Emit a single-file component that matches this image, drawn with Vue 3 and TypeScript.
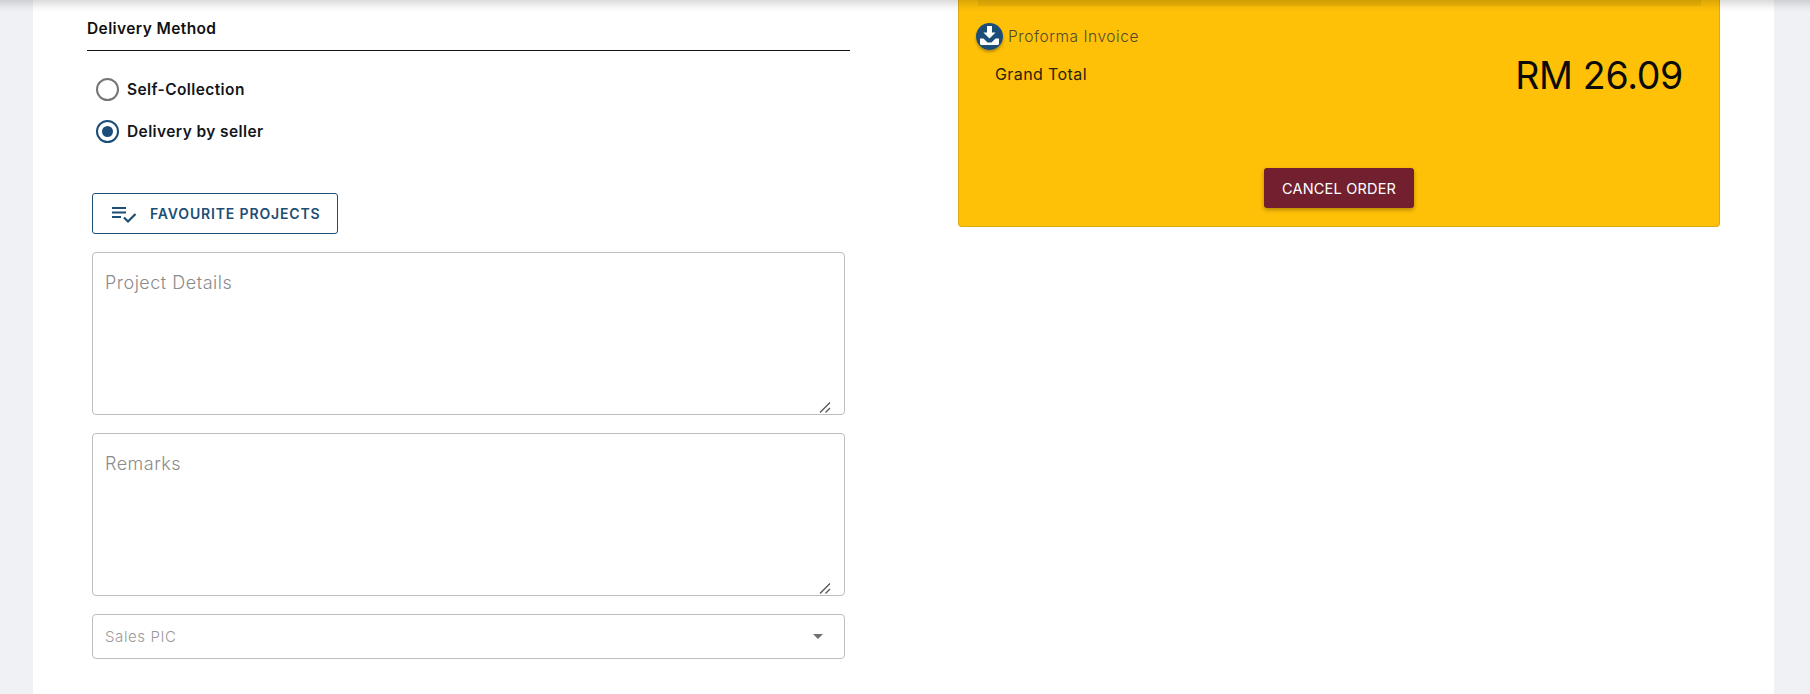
<script setup lang="ts">
interface Method { label: string; checked: boolean }
const methods: Method[] = [
  { label: 'Self-Collection', checked: false },
  { label: 'Delivery by seller', checked: true },
]
const notes: string[] = ['Project Details', 'Remarks']
</script>

<template>
  <div class="page">
    <div class="topshade"></div>
    <main class="panel">
      <section class="left">
        <h2 class="heading">Delivery Method</h2>
        <div class="radios">
          <label v-for="m in methods" :key="m.label" class="radio">
            <span class="dot" :class="{ on: m.checked }"></span>
            <span>{{ m.label }}</span>
          </label>
        </div>
        <div class="fields">
          <button class="fav" type="button">
            <svg width="26" height="20" viewBox="0 0 26 20" fill="none">
              <path d="M1 4h14M1 8.500h14M1 13h9" stroke="#1d4e74" stroke-width="2.200" />
              <path d="M13 13.500l4 4 7.500-7.500" stroke="#1d4e74" stroke-width="2.200" />
            </svg>
            <span>FAVOURITE PROJECTS</span>
          </button>
          <div v-for="n in notes" :key="n" class="area-wrap">
            <textarea class="area" :placeholder="n"></textarea>
            <svg class="grip" width="12" height="11" viewBox="0 0 12 11" fill="none">
              <path d="M1 10.500L11 0.500M6.500 10.500L11 6" stroke="#555" stroke-width="1.300" />
            </svg>
          </div>
          <div class="select">
            <span>Sales PIC</span>
            <i class="caret"></i>
          </div>
        </div>
      </section>
      <aside class="card">
        <div class="card-rule"></div>
        <div class="invoice">
          <span class="dl">
            <svg width="27" height="27" viewBox="0 0 27 27">
              <circle cx="13.500" cy="13.500" r="13.500" fill="#1a4d78" />
              <path d="M11 3h5v6.500h3.600l-6.100 6-6.100-6H11z" fill="#fff" />
              <path d="M4 15.500h3.500l4 4h4l4-4H23v5a1.500 1.500 0 0 1-1.500 1.500h-16A1.500 1.500 0 0 1 4 20.500z" fill="#fff" />
            </svg>
          </span>
          <span class="inv-text">Proforma Invoice</span>
        </div>
        <div class="total">
          <span class="grand">Grand Total</span>
          <span class="amount">RM 26.09</span>
        </div>
        <button class="cancel" type="button">CANCEL ORDER</button>
      </aside>
    </main>
  </div>
</template>

<style>
html, body { margin: 0; background: #eff1f5; }
</style>

<style scoped>
.page {
  position: relative;
  height: 694px;
  padding: 0 36px 0 33px;
  box-sizing: border-box;
  overflow: hidden;
  font-family: "Inter", "Open Sans", sans-serif;
}
.topshade {
  position: absolute;
  inset: 0 0 auto 0;
  height: 12px;
  background: linear-gradient(rgba(0, 0, 0, 0.14), rgba(0, 0, 0, 0.04) 60%, rgba(0, 0, 0, 0));
  z-index: 2;
}
.panel {
  display: flex;
  height: 100%;
  background: #fff;
  padding-left: 54px;
}
.left { width: 763px; }
.heading {
  margin: 0;
  height: 51px;
  box-sizing: border-box;
  padding-top: 19px;
  border-bottom: 1px solid #111;
  font-size: 15.500px;
  line-height: 20px;
  font-weight: 600;
  letter-spacing: 0.4px;
  color: #111;
}
.radios {
  display: flex;
  flex-direction: column;
  gap: 19px;
  padding: 27px 0 0 9px;
}
.radio {
  display: flex;
  align-items: center;
  gap: 8px;
  height: 23px;
  font-size: 15.500px;
  font-weight: 600;
  letter-spacing: 0.4px;
  color: #14161a;
}
.dot {
  width: 23px;
  height: 23px;
  box-sizing: border-box;
  border: 2px solid #757575;
  border-radius: 50%;
  display: block;
  position: relative;
}
.dot.on { border-color: #1a4d78; }
.dot.on::after {
  content: "";
  position: absolute;
  inset: 4px;
  border-radius: 50%;
  background: #1a4d78;
}
.fields {
  display: flex;
  flex-direction: column;
  align-items: flex-start;
  gap: 19px;
  padding: 50px 0 0 5px;
}
.fav {
  display: flex;
  align-items: center;
  gap: 13px;
  width: 246px;
  height: 41px;
  margin-bottom: -1px;
  padding: 0 0 0 18px;
  box-sizing: border-box;
  border: 1px solid #1d4e74;
  border-radius: 3px;
  background: #fff;
  color: #1d4e74;
  font: 600 14px "Inter", sans-serif;
  letter-spacing: 0.85px;
  white-space: nowrap;
}
.area-wrap {
  position: relative;
  width: 753px;
  height: 163px;
  margin-bottom: -1px;
}
.area {
  display: block;
  width: 100%;
  height: 100%;
  box-sizing: border-box;
  padding: 18px 12px;
  border: 1px solid #bdbdbd;
  border-radius: 4px;
  font: 300 18px/24px "Inter", sans-serif;
  letter-spacing: 0.5px;
  outline: none;
  margin: 0;
  resize: none;
}
.area::placeholder { color: #8b8b8b; opacity: 1; }
.grip {
  position: absolute;
  right: 14px;
  bottom: 2px;
}
.select {
  width: 753px;
  height: 45px;
  box-sizing: border-box;
  padding: 0 21px 0 12px;
  border: 1px solid #bdbdbd;
  border-radius: 4px;
  display: flex;
  align-items: center;
  justify-content: space-between;
  color: #9a9a9a;
  font-size: 15px;
  font-weight: 300;
  letter-spacing: 0.6px;
}
.caret {
  width: 0;
  height: 0;
  border-left: 5.500px solid transparent;
  border-right: 5.500px solid transparent;
  border-top: 5.500px solid #707070;
}
.card {
  width: 762px;
  height: 227px;
  margin-left: 108px;
  box-sizing: border-box;
  background: #ffc107;
  border: 1px solid #dcab12;
  border-top: 0;
  border-radius: 0 0 4px 4px;
  padding: 0 18px 0 19px;
  display: flex;
  flex-direction: column;
  position: relative;
}
.card-rule {
  height: 6px;
  background: #f0b606;
}
.invoice {
  display: flex;
  align-items: center;
  gap: 5px;
  margin: 17px 0 0 -2px;
  height: 27px;
}
.dl {
  width: 27px;
  height: 27px;
  border-radius: 50%;
  box-shadow: 0 2px 3px rgba(0, 0, 0, 0.3);
}
.dl svg { display: block; }
.inv-text {
  font-size: 15.500px;
  font-weight: 300;
  letter-spacing: 0.55px;
  color: #4f4a2e;
  margin-top: 0;
}
.total {
  display: flex;
  justify-content: space-between;
  align-items: flex-start;
  padding: 0 18px 0 17px;
  margin-top: 4px;
}
.grand {
  font-size: 16px;
  font-weight: 400;
  letter-spacing: 0.4px;
  color: #2a2209;
  margin-top: 10px;
}
.amount {
  font-family: "Inter", sans-serif;
  font-size: 37.500px;
  line-height: 44px;
  color: #0b0b08;
  font-weight: 400;
  letter-spacing: -0.3px;
}
.cancel {
  position: absolute;
  left: 305px;
  top: 168px;
  width: 150px;
  height: 40px;
  border: 0;
  border-radius: 3px;
  background: #72202f;
  color: #fff;
  font: 400 14.500px "Inter", sans-serif;
  letter-spacing: 0.2px;
  box-shadow: 0 2px 4px rgba(0, 0, 0, 0.3);
}
</style>
